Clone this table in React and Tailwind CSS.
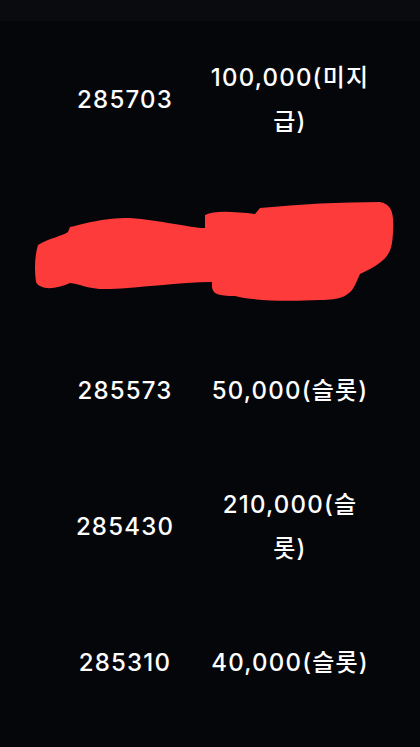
const rows = [
  { id: '285703', amount: '100,000(미지급)' },
  { id: null, amount: null },
  { id: '285573', amount: '50,000(슬롯)' },
  { id: '285430', amount: '210,000(슬롯)' },
  { id: '285310', amount: '40,000(슬롯)' },
];

function Redacted() {
  return (
    <svg width="420" height="158" viewBox="0 0 420 158" className="block">
      <path
        d="M38 245 C50 238 62 236 68 232 L70 227 C85 224 100 218 130 218 C160 220 190 228 205 228 L205 215 C215 210 235 212 255 214 L260 208 C300 204 340 202 380 202 C392 205 394 212 393 232 C392 252 390 260 360 274 L355 285 C350 296 340 300 320 300 C280 302 250 300 235 296 C218 296 213 294 212 287 L212 282 C180 282 140 288 110 289 C90 290 80 284 70 283 C55 290 40 290 36 282 C34 268 35 255 38 245 Z"
        transform="translate(0 -178)"
        fill="#fd3b3b"
      />
    </svg>
  );
}

export default function App() {
  return (
    <div
      className="w-[420px] h-[747px] overflow-hidden bg-[#05060a] text-white"
      style={{ fontFamily: 'Inter, "Noto Sans CJK KR", sans-serif' }}
    >
      <div className="h-[21px] bg-[#0a0b0f]"></div>
      {rows.map((row, i) =>
        row.id ? (
          <div key={i} className="flex items-center py-[35px] pl-[40px] text-[24px] font-medium leading-[44px] tracking-[1.2px]">
            <div className="w-[170px] text-center">{row.id}</div>
            <div className="w-[160px] text-center">{row.amount}</div>
          </div>
        ) : (
          <div key={i} className="h-[155px] flex items-center">
            <Redacted />
          </div>
        )
      )}
    </div>
  );
}
